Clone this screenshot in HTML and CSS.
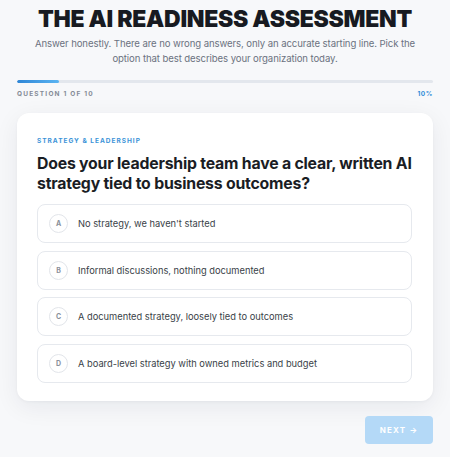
FILE: index.html
```html
<!DOCTYPE html>
<html lang="en">
<head>
<meta charset="UTF-8" />
<meta name="viewport" content="width=device-width, initial-scale=1" />
<title>The AI Readiness Assessment</title>
<link rel="stylesheet" href="styles.css">
</head>
<body>

<div class="container">
  <h1 class="title">THE AI READINESS ASSESSMENT</h1>
  <p class="intro">Answer honestly. There are no wrong answers, only an accurate starting line. Pick the option that best describes your organization today.</p>

  <!-- Progress -->
  <div class="progress">
    <div class="progress-fill" style="width:10%"></div>
  </div>
  <div class="progress-meta">
    <span>QUESTION 1 OF 10</span>
    <span class="progress-pct">10%</span>
  </div>

  <!-- Question card -->
  <div class="card">
    <div class="category">STRATEGY &amp; LEADERSHIP</div>
    <h2 class="question">Does your leadership team have a clear, written AI strategy tied to business outcomes?</h2>
    <div class="options">
      <div class="option"><span class="letter">A</span>No strategy, we haven't started</div>
      <div class="option"><span class="letter">B</span>Informal discussions, nothing documented</div>
      <div class="option"><span class="letter">C</span>A documented strategy, loosely tied to outcomes</div>
      <div class="option"><span class="letter">D</span>A board-level strategy with owned metrics and budget</div>
    </div>
  </div>

  <div class="actions">
    <button class="next" disabled>NEXT →</button>
  </div>
</div>

</body>
</html>
```

FILE: styles.css
```css
* {
  box-sizing: border-box;
}
body {
  margin: 0;
  background: #f7f8fa;
  color: #1a1d24;
  font-family: Inter, 'Noto Sans', sans-serif;
}
.container {
  width: 416px;
  margin: 0 auto;
  padding-top: 4px;
}
.title {
  margin: 0;
  text-align: center;
  font-size: 23px;
  font-weight: 900;
  letter-spacing: -0.3px;
  line-height: 30px;
  color: #171a21;
}
.intro {
  margin: 2px 0 0;
  text-align: center;
  font-size: 9.6px;
  line-height: 15px;
  letter-spacing: -0.1px;
  color: #6b7280;
  padding: 0 4px;
}
.progress {
  margin-top: 14px;
  height: 3px;
  background: #e3e7ed;
  border-radius: 2px;
  overflow: hidden;
}
.progress-fill {
  height: 100%;
  background: linear-gradient(90deg, #2f86d6, #5ab4f2);
  border-radius: 2px;
}
.progress-meta {
  display: flex;
  justify-content: space-between;
  margin-top: 7px;
  font-size: 6.5px;
  font-weight: 700;
  letter-spacing: 1.2px;
  color: #858b96;
}
.progress-pct {
  color: #2f8bd8;
  letter-spacing: 0.6px;
}

/* Card */
.card {
  margin-top: 15px;
  background: #fff;
  border-radius: 12px;
  padding: 24px 20px 18px 20px;
  box-shadow: 0 6px 24px rgba(20, 30, 50, 0.07), 0 1px 3px rgba(20, 30, 50, 0.04);
}
.category {
  font-size: 6.5px;
  font-weight: 700;
  letter-spacing: 1px;
  color: #3b93d8;
}
.question {
  margin: 9px 0 0;
  font-size: 15.8px;
  font-weight: 700;
  line-height: 20px;
  letter-spacing: -0.2px;
  color: #1a1d24;
}
.options {
  margin-top: 10px;
  margin-right: 1px;
  display: flex;
  flex-direction: column;
  gap: 7.7px;
}
.option {
  display: flex;
  align-items: center;
  gap: 10px;
  height: 39px;
  padding: 0 11px;
  border: 1px solid #e6e9ee;
  border-radius: 8px;
  font-size: 9.3px;
  color: #3a3f48;
}
.letter {
  width: 19px;
  height: 19px;
  border-radius: 50%;
  border: 1px solid #e2e5ea;
  display: flex;
  align-items: center;
  justify-content: center;
  font-size: 7px;
  font-weight: 700;
  color: #8a909a;
  flex-shrink: 0;
}

.actions {
  display: flex;
  justify-content: flex-end;
  margin-top: 15px;
}
.next {
  width: 68px;
  height: 28px;
  border: none;
  border-radius: 4px;
  background: #b4d9f7;
  color: #fff;
  font-family: inherit;
  font-size: 8px;
  font-weight: 700;
  letter-spacing: 1.2px;
}
```
